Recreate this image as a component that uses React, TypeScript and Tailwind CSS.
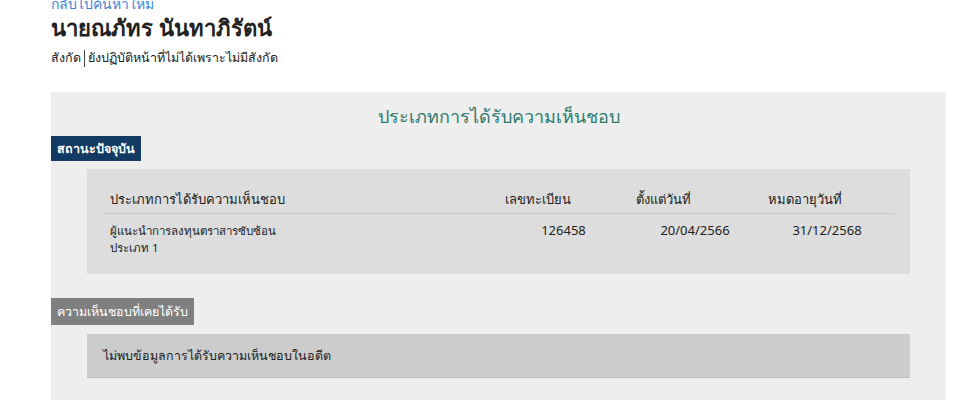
import React from 'react';

const rows = [
  {
    type: ['ผู้แนะนำการลงทุนตราสารซับซ้อน', 'ประเภท 1'],
    regNo: '126458',
    from: '20/04/2566',
    to: '31/12/2568',
  },
];

const App: React.FC = () => {
  return (
    <div className="min-h-[400px] bg-white text-[#222] font-['Noto_Sans',sans-serif] overflow-hidden">
      <div className="pl-[51px] pr-[14px]">
        <a href="#" className="block -mt-[5px] text-[14px] leading-[17px] text-[#3a87d6]">
          กลับไปค้นหาใหม่
        </a>
        <h1 className="text-[22px] leading-[30px] font-semibold text-[#222]">นายณภัทร นันทาภิรัตน์</h1>
        <div className="mt-[7px] flex items-center text-[12.5px] leading-[18px] text-[#222]">
          <span>สังกัด</span>
          <span className="mx-[3px] h-[17px] w-px bg-[#444]" />
          <span>ยังปฏิบัติหน้าที่ไม่ได้เพราะไม่มีสังกัด</span>
        </div>

        <div className="mt-[25px] min-h-[320px] bg-[#eeeeee] pb-8">
          <h2 className="pt-[10px] text-center text-[18px] leading-[28px] text-[#2f7a6b]">
            ประเภทการได้รับความเห็นชอบ
          </h2>

          <div className="mt-[6px] inline-block bg-[#123a63] px-[6px] text-[12.5px] leading-[25px] font-semibold text-white">
            สถานะปัจจุบัน
          </div>

          <div className="mx-[36px] mt-[8px] bg-[#dddddd] px-[16px] pt-[16px] pb-[18px]">
            <div className="grid grid-cols-[395px_131px_132px_132px] border-b border-[#c8c8c8] text-[13px] leading-[28px] font-medium">
              <div className="px-[7px]">ประเภทการได้รับความเห็นชอบ</div>
              <div className="px-[7px]">เลขทะเบียน</div>
              <div className="px-[7px]">ตั้งแต่วันที่</div>
              <div className="px-[7px]">หมดอายุวันที่</div>
            </div>
            {rows.map((r, i) => (
              <div key={i} className="grid grid-cols-[395px_131px_132px_132px] pt-[8px] text-[13px]">
                <div className="px-[7px] text-[11.5px] leading-[17px]">
                  {r.type.map((t, j) => (
                    <div key={j}>{t}</div>
                  ))}
                </div>
                <div className="text-center leading-[17px]">{r.regNo}</div>
                <div className="text-center leading-[17px]">{r.from}</div>
                <div className="text-center leading-[17px]">{r.to}</div>
              </div>
            ))}
          </div>

          <div className="mt-[24px] inline-block bg-[#808080] px-[6px] text-[12.5px] leading-[27px] font-medium text-white">
            ความเห็นชอบที่เคยได้รับ
          </div>

          <div className="mx-[36px] mt-[9px] bg-[#cccccc] border-b border-[#bdbdbd] px-[16px] py-[11px] text-[12.5px] leading-[21px]">
            ไม่พบข้อมูลการได้รับความเห็นชอบในอดีต
          </div>
        </div>
      </div>
    </div>
  );
};

export default App;
